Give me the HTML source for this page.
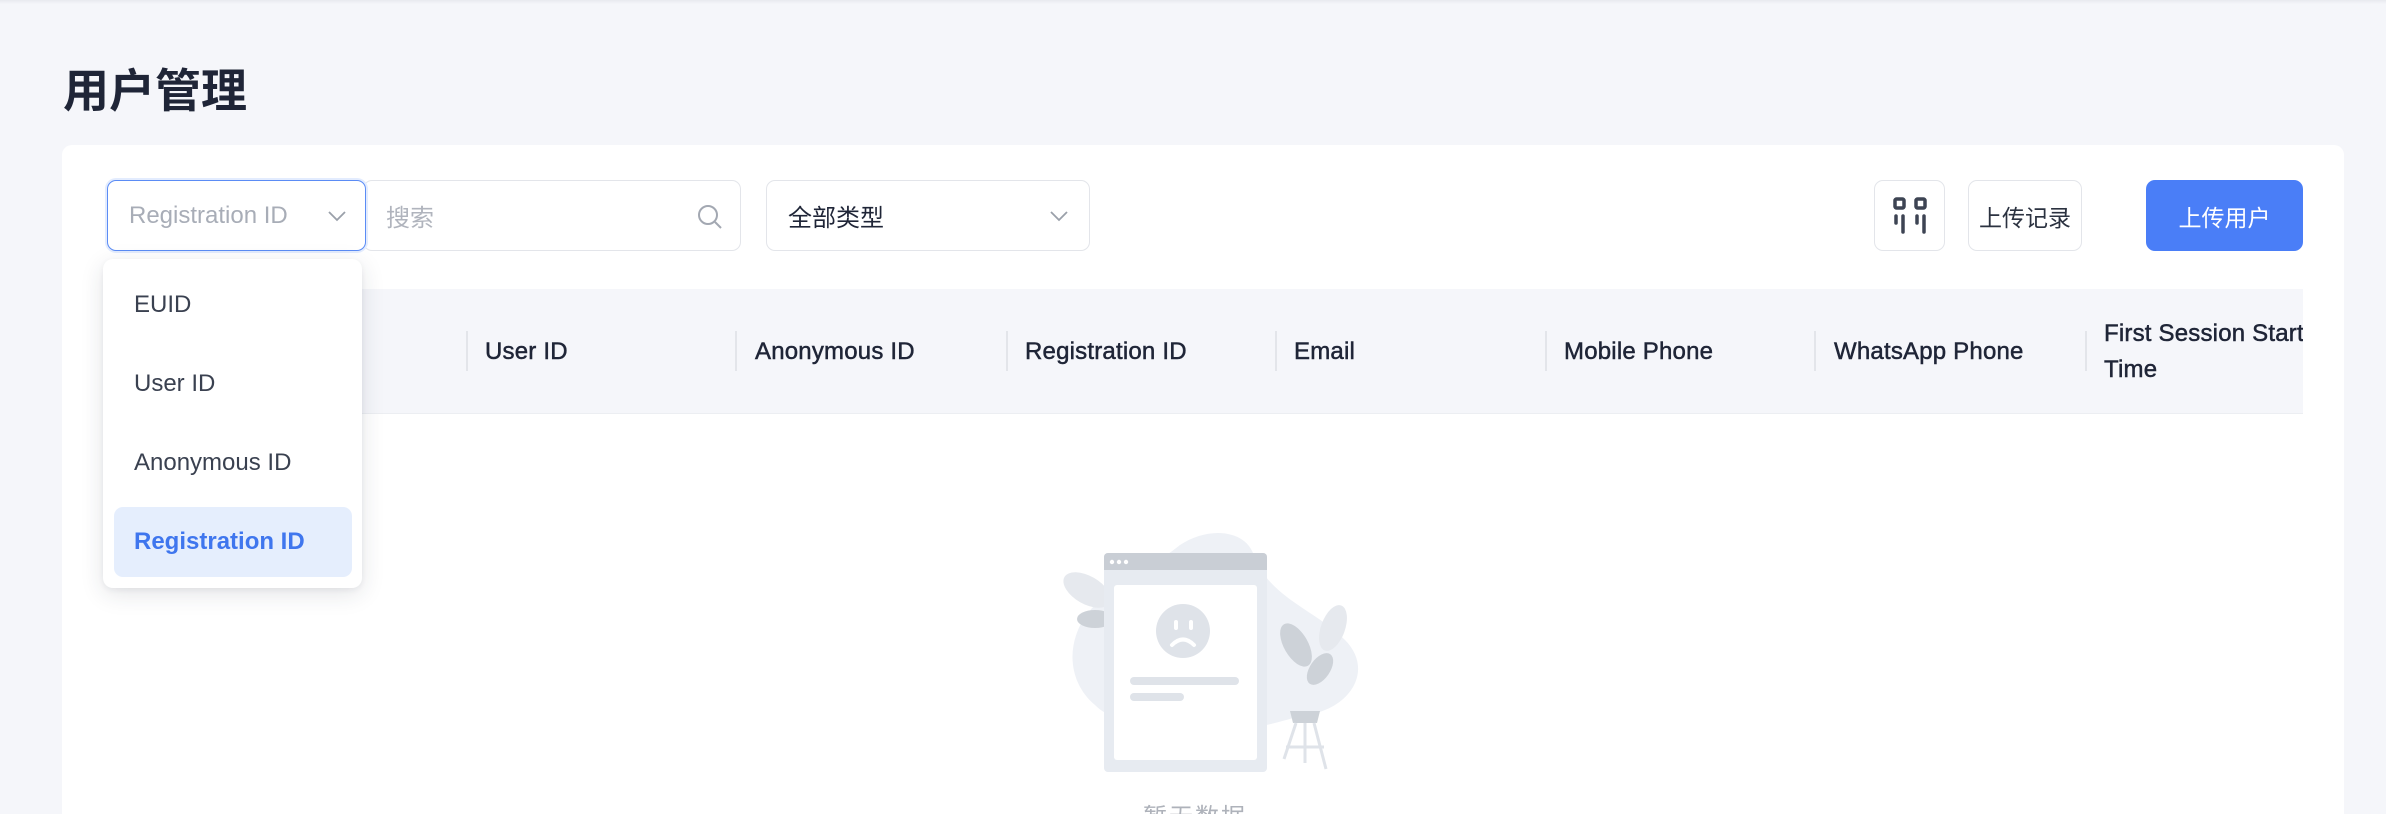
<!DOCTYPE html>
<html><head><meta charset="utf-8"><style>
*{box-sizing:border-box;margin:0;padding:0}
html,body{width:2386px;height:814px;overflow:hidden}
body{background:#f5f6fa;font-family:"Liberation Sans","Noto Sans CJK SC",sans-serif;position:relative;color:#1f2537}
.abs{position:absolute}
.topshadow{left:0;top:0;width:2386px;height:4px;background:linear-gradient(#e8eaef,#f5f6fa)}
h1{position:absolute;left:63px;top:58px;font-size:46px;font-weight:bold;color:#1f2537;letter-spacing:0;font-family:"Noto Sans CJK SC",sans-serif;line-height:60px}
.card{left:62px;top:145px;width:2282px;height:669px;background:#fff;border-radius:10px 10px 0 0}
.inp{border:1.5px solid #e3e5ea;border-radius:9px;background:#fff;height:71px;display:flex;align-items:center;font-size:24px}
.th{left:107px;top:289px;width:2196px;height:125px;background:#f5f6fa;border-bottom:1.5px solid #eceef2}
.col{position:absolute;top:0;height:125px;display:flex;align-items:center;font-size:24px;font-weight:normal;color:#1f2537;letter-spacing:.2px;-webkit-text-stroke:0.5px #1f2537}
.div{position:absolute;top:331px;width:1.5px;height:40px;background:#e3e5ea}
.dd{left:103px;top:259px;width:259px;height:329px;background:#fff;border-radius:10px;box-shadow:0 6px 24px rgba(30,40,60,.12),0 2px 6px rgba(30,40,60,.06)}
.it{position:absolute;left:31px;font-size:24px;color:#3a4150}
.btn{border-radius:9px;display:flex;align-items:center;justify-content:center;font-size:23px;font-family:"Noto Sans CJK SC",sans-serif;white-space:nowrap}
</style></head><body>
<div class="abs topshadow"></div>
<h1>用户管理</h1>
<div class="abs card"></div>

<div class="abs inp" style="left:363px;top:180px;width:378px;padding-left:22px;color:#b0b4bd;font-family:'Noto Sans CJK SC',sans-serif">搜索
<svg class="abs" style="left:332px;top:22px" width="28" height="28" viewBox="0 0 28 28" fill="none" stroke="#a3a8b2" stroke-width="2"><circle cx="12" cy="12" r="9"/><path d="M19 19l6 6"/></svg></div>
<div class="abs inp" style="left:107px;top:180px;width:259px;border-color:#5b8cf5;padding-left:21px;color:#a8adb7;box-shadow:0 0 0 2px #e3ecfe">Registration ID
<svg class="abs" style="left:219px;top:28px" width="20" height="14" viewBox="0 0 20 14" fill="none" stroke="#9aa0aa" stroke-width="1.8"><path d="M2 3l8 8 8-8"/></svg></div>
<div class="abs inp" style="left:766px;top:180px;width:324px;padding-left:21px;color:#1f2537;font-family:'Noto Sans CJK SC',sans-serif">全部类型
<svg class="abs" style="left:282px;top:28px" width="20" height="14" viewBox="0 0 20 14" fill="none" stroke="#9aa0aa" stroke-width="1.8"><path d="M2 3l8 8 8-8"/></svg></div>

<div class="abs btn" style="left:1874px;top:180px;width:71px;height:71px;border:1.5px solid #e3e5ea;background:#fff">
<svg width="36" height="40" viewBox="0 0 36 40" fill="none" stroke="#3d4453" stroke-width="3.5" stroke-linecap="round"><rect x="3" y="3" width="9" height="9" rx="1.5"/><rect x="24" y="3" width="9" height="9" rx="1.5"/><path d="M4 20v7M11 20v16M25 20v7M32 20v16"/></svg></div>
<div class="abs btn" style="left:1968px;top:180px;width:114px;height:71px;border:1.5px solid #e3e5ea;background:#fff;color:#2b3240">上传记录</div>
<div class="abs btn" style="left:2146px;top:180px;width:157px;height:71px;background:#4a7ef7;color:#fff">上传用户</div>

<div class="abs th">
<div class="col" style="left:378px">User ID</div>
<div class="col" style="left:648px">Anonymous ID</div>
<div class="col" style="left:918px">Registration ID</div>
<div class="col" style="left:1187px">Email</div>
<div class="col" style="left:1457px">Mobile Phone</div>
<div class="col" style="left:1727px">WhatsApp Phone</div>
<div class="col" style="left:1997px;width:199px;overflow:hidden;white-space:nowrap;line-height:36px;align-items:center"><div>First Session Start<br>Time</div></div>
</div>
<div class="div" style="left:466px"></div><div class="div" style="left:735px"></div><div class="div" style="left:1006px"></div><div class="div" style="left:1275px"></div><div class="div" style="left:1545px"></div><div class="div" style="left:1814px"></div><div class="div" style="left:2085px"></div>

<svg class="abs" style="left:1040px;top:520px" width="330" height="280" viewBox="1040 520 330 280">
<path d="M1180 545c30-20 70-15 75 15 20 40 60 50 90 80 30 30 5 70-40 75-40 10-60 20-90 5-40-10-90 15-120-15-30-25-30-70 0-100 30-25 60-40 85-60z" fill="#eef1f6"/>
<ellipse cx="1087" cy="590" rx="26" ry="14" transform="rotate(30 1087 590)" fill="#e6e9ee"/>
<ellipse cx="1095" cy="619" rx="18" ry="9" fill="#cdd2d8"/>
<rect x="1104" y="553" width="163" height="219" rx="4" fill="#e7ebf1"/>
<path d="M1104 557a4 4 0 0 1 4-4h155a4 4 0 0 1 4 4v13h-163z" fill="#c9ced5"/>
<circle cx="1112" cy="562" r="2.2" fill="#fff"/><circle cx="1119" cy="562" r="2.2" fill="#fff"/><circle cx="1126" cy="562" r="2.2" fill="#fff"/>
<rect x="1114" y="585" width="143" height="175" rx="3" fill="#fff"/>
<circle cx="1183" cy="631" r="27" fill="#dfe3e9"/>
<rect x="1174" y="620" width="4" height="10" rx="2" fill="#fff"/><rect x="1189" y="620" width="4" height="10" rx="2" fill="#fff"/>
<path d="M1172 645q11-11 22 0" stroke="#fff" stroke-width="4" fill="none" stroke-linecap="round"/>
<rect x="1130" y="677" width="109" height="8" rx="4" fill="#dfe3e9"/>
<rect x="1130" y="693" width="54" height="8" rx="4" fill="#dfe3e9"/>
<ellipse cx="1333" cy="628" rx="12" ry="24" transform="rotate(20 1333 628)" fill="#e6e9ee"/>
<ellipse cx="1296" cy="645" rx="12" ry="24" transform="rotate(-30 1296 645)" fill="#cdd2d8"/>
<ellipse cx="1320" cy="669" rx="10" ry="18" transform="rotate(35 1320 669)" fill="#cdd2d8"/>
<path d="M1290 711h30l-3 12h-24z" fill="#cdd2d8"/>
<path d="M1296 723l-12 36M1314 723l12 46M1305 723v40M1286 747h38" stroke="#dfe3e9" stroke-width="3"/>
</svg>
<div class="abs" style="left:1143px;top:797px;width:130px;white-space:nowrap;font-size:24px;color:#aeb2ba;letter-spacing:2px;font-family:'Noto Sans CJK SC',sans-serif">暂无数据</div>

<div class="abs dd">
<div class="it" style="top:32px">EUID</div>
<div class="it" style="top:111px">User ID</div>
<div class="it" style="top:190px">Anonymous ID</div>
<div class="abs" style="left:11px;top:248px;width:238px;height:70px;background:#e5eefd;border-radius:9px"></div>
<div class="it" style="top:269px;color:#3f76ee;font-weight:bold">Registration ID</div>
</div>
</body></html>
